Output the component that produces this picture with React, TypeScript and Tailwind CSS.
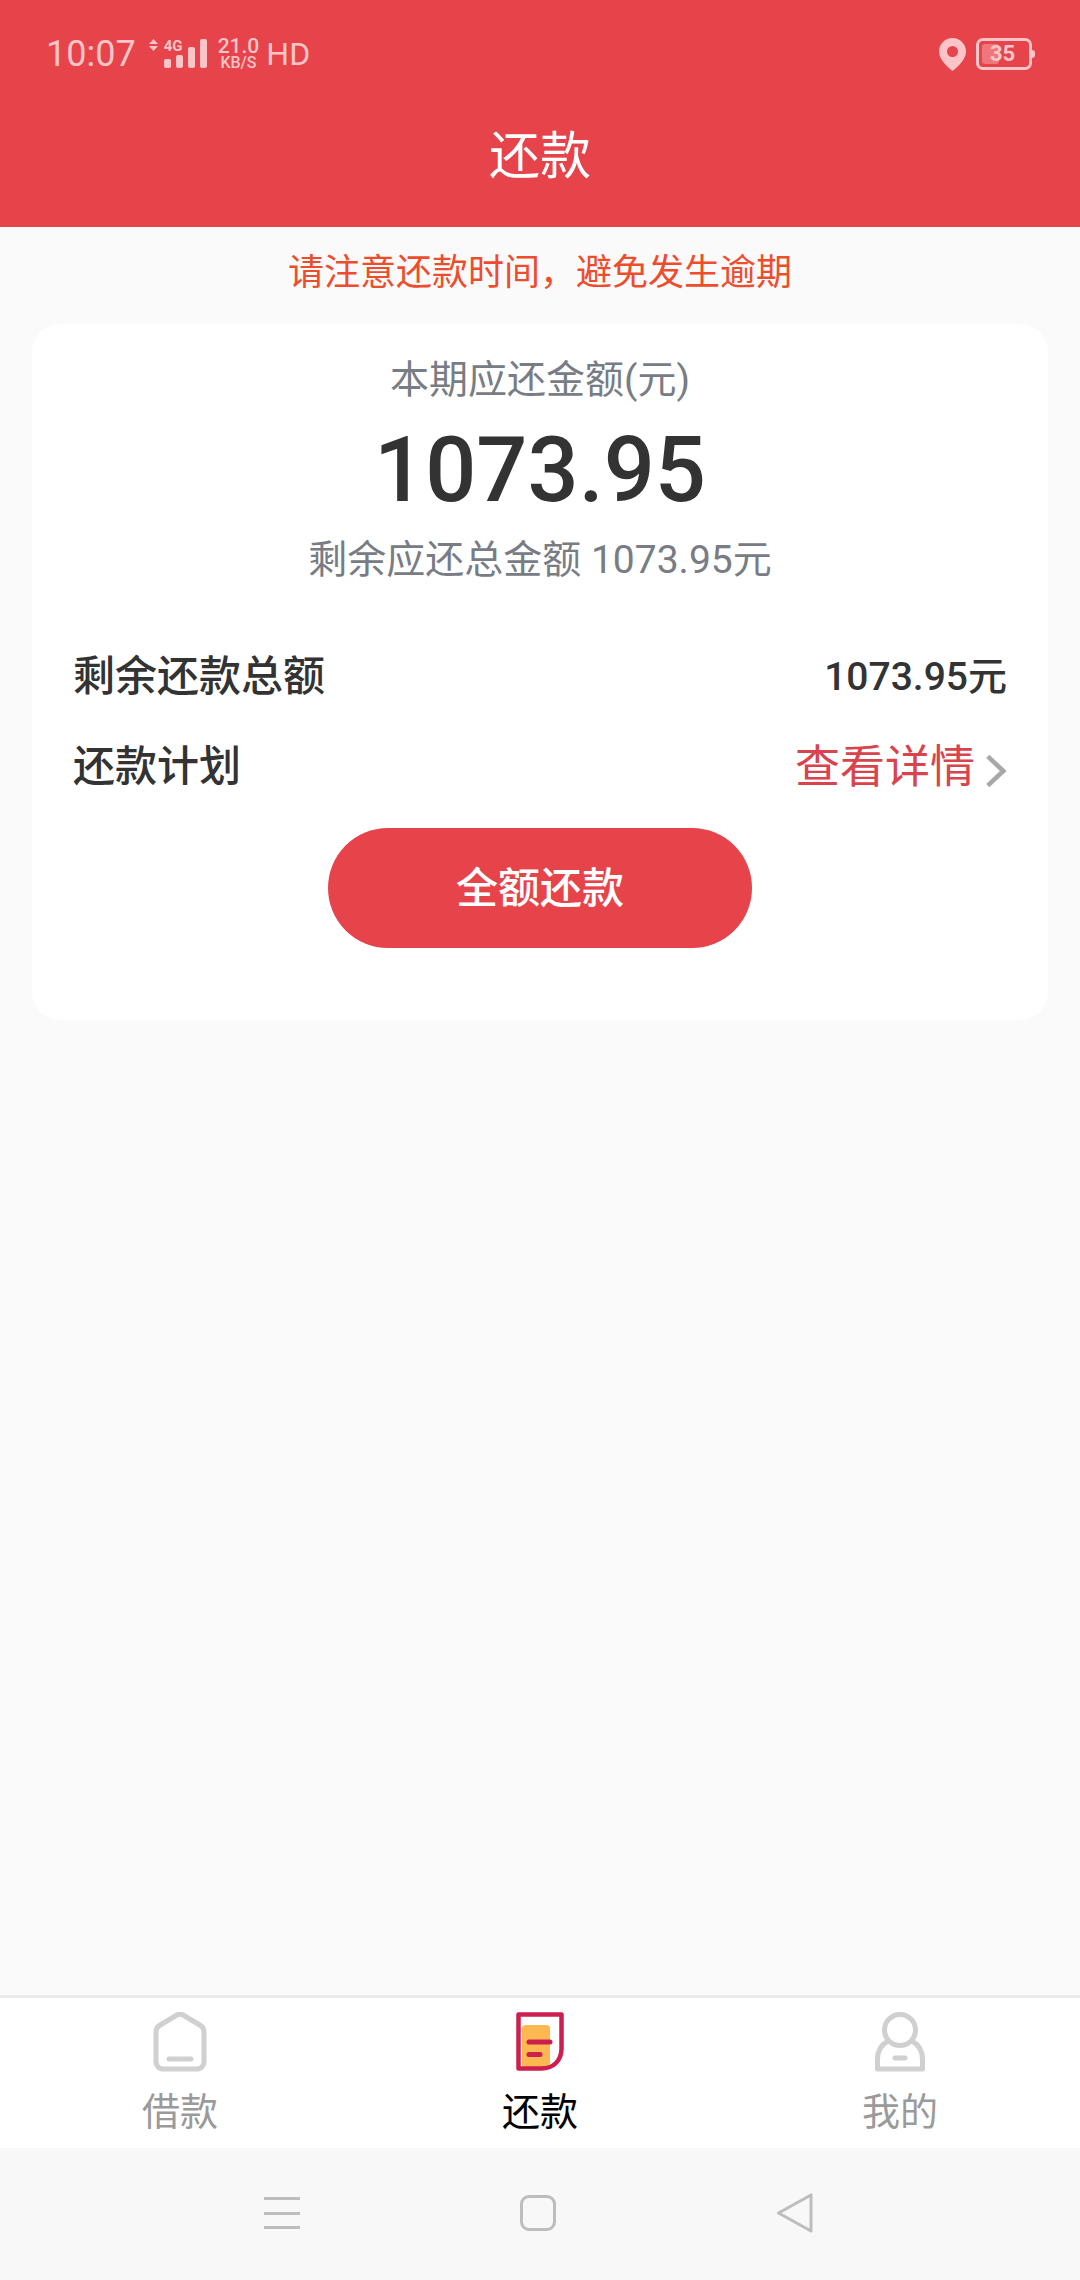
const cjk = { fontFamily: 'Roboto, "Noto Sans CJK SC", sans-serif' };

function StatusBar() {
  return (
    <div className="h-[108px] flex items-center justify-between pl-[46px] pr-[45px] text-[#fbc5c8]">
      <div className="flex items-center">
        <span className="text-[36px] leading-none">10:07</span>
        <div className="relative ml-[13px] -mt-[1px] w-[59px] h-[30px]">
          <svg width="59" height="30" viewBox="0 0 59 30" className="block" fill="currentColor">
            <path d="M4.500 0l4.500 5H0zM4.500 12L9 7H0z" />
            <rect x="15" y="20" width="7" height="9" rx="2" />
            <rect x="27" y="16" width="7" height="13" rx="2" />
            <rect x="39" y="8" width="7" height="21" rx="2" />
            <rect x="51" y="0" width="7" height="29" rx="2" />
          </svg>
          <span className="absolute left-[15px] top-0 text-[15px] leading-[14px] font-bold">4G</span>
        </div>
        <div className="ml-[10px] flex flex-col items-center font-medium -mt-[1px]">
          <span className="text-[21px] leading-[18px]">21.0</span>
          <span className="text-[16px] leading-[15px]">KB/S</span>
        </div>
        <span className="ml-[7px] text-[32px] leading-none">HD</span>
      </div>
      <div className="flex items-center">
        <svg width="27" height="33" viewBox="0 0 27 33" fill="currentColor">
          <path fillRule="evenodd" d="M13.500 0C6 0 0 6 0 13.500c0 8 8 15 13.500 19.500C19 28.500 27 21.500 27 13.500 27 6 21 0 13.500 0zm0 8a5.500 5.500 0 110 11 5.500 5.500 0 010-11z" />
        </svg>
        <div className="ml-[10px] relative w-[56px] h-[32px] rounded-[7px] border-[3px] border-[#fbc5c8] flex items-center justify-center">
          <div className="absolute left-[3px] top-[3px] bottom-[3px] w-[17px] rounded-[3px] bg-[#fbc5c8] opacity-40" />
          <span className="relative text-[22px] leading-none font-bold -ml-[3px]">35</span>
        </div>
        <div className="w-[3px] h-[8px] bg-[#fbc5c8] rounded-r-full" />
      </div>
    </div>
  );
}

function Tab({ label, active, children }: { label: string; active?: boolean; children: React.ReactNode }) {
  return (
    <div className="flex-1 flex flex-col items-center pt-[14px]">
      {children}
      <span className={`mt-[18px] text-[38px] leading-[44px] ${active ? "text-black" : "text-[#9a9a9a]"}`}>{label}</span>
    </div>
  );
}

export default function App() {
  return (
    <div className="w-[1080px] h-[2280px] flex flex-col bg-[#fafafa]" style={cjk}>
      <div className="h-[227px] bg-[#e6434a]">
        <StatusBar />
        <div className="text-center text-white text-[51px] leading-[72px] mt-[13px]">还款</div>
      </div>

      <div className="text-center text-[#ee4d2d] text-[36px] leading-[44px] mt-[24px]">请注意还款时间，避免发生逾期</div>

      <div className="mx-[32px] mt-[29px] h-[696px] bg-white rounded-[28px] pt-[32px] px-[41px] flex flex-col">
        <div className="text-center text-[#787c84] text-[39px] leading-[48px]">本期应还金额(元)</div>
        <div className="text-center text-[#333333] text-[90px] leading-[100px] font-medium mt-[17px]">1073.95</div>
        <div className="text-center text-[#787c84] text-[39px] leading-[48px] mt-[15px]">剩余应还总金额 1073.95元</div>

        <div className="flex items-center justify-between mt-[68px] h-[48px] text-[#333333]">
          <span className="text-[42px] font-medium">剩余还款总额</span>
          <span className="text-[39px] font-medium mt-[2px]">1073.95元</span>
        </div>
        <div className="flex items-center justify-between mt-[42px] h-[48px]">
          <span className="text-[42px] font-medium text-[#333333]">还款计划</span>
          <div className="flex items-center mt-[3px]">
            <span className="text-[45px] text-[#d9434b]">查看详情</span>
            <svg width="22" height="36" viewBox="0 0 24 38" className="ml-[10px] mt-[6px]" fill="none" stroke="#a8a8a8" strokeWidth="5">
              <path d="M3 3l17 16L3 35" />
            </svg>
          </div>
        </div>
        <div className="mt-[38px] self-center w-[424px] h-[120px] rounded-full bg-[#e6434a] text-white text-[42px] font-medium flex items-center justify-center">
          全额还款
        </div>
      </div>

      <div className="mt-auto h-[153px] bg-white border-t-[3px] border-[#ebebeb] flex">
        <Tab label="借款">
          <svg width="54" height="60" viewBox="0 0 54 60" fill="none" stroke="#d0d0d0" strokeWidth="5" strokeLinecap="round" strokeLinejoin="round">
            <path d="M3 20c0-3 1-5 3.500-6.500L23 3.500c2.500-1.500 5.500-1.500 8 0l16.500 10c2.500 1.500 3.500 3.500 3.500 6.500v29c0 5-3 8-8 8H11c-5 0-8-3-8-8z" />
            <path d="M16 47h22" />
          </svg>
        </Tab>
        <Tab label="还款" active>
          <svg width="48" height="60" viewBox="0 0 48 60">
            <rect x="6" y="13" width="28" height="44" rx="4" fill="#fdb851" />
            <path d="M2.500 2.500h43v34c0 12-8 20-20 20h-23z" fill="none" stroke="#cc1f4f" strokeWidth="4.500" strokeLinejoin="round" />
            <path d="M13 30h21M13 42.500h11" stroke="#cc1f4f" strokeWidth="5" strokeLinecap="round" />
          </svg>
        </Tab>
        <Tab label="我的">
          <svg width="50" height="60" viewBox="0 0 50 60" fill="none" stroke="#d0d0d0" strokeWidth="5" strokeLinecap="round" strokeLinejoin="round">
            <circle cx="25" cy="18" r="15.500" />
            <path d="M13 29C6 33 2.500 40 2.500 47v10h45V47c0-7-3.500-14-10.500-18" />
            <path d="M20 46h10" />
          </svg>
        </Tab>
      </div>

      <div className="h-[132px] bg-[#f8f8f8] flex items-start pt-[44px]">
        <div className="w-full flex justify-between items-center pl-[264px] pr-[266px]">
          <div className="w-[36px] h-[32px] flex flex-col justify-between">
            <div className="h-[3px] bg-[#bdbdbd]" />
            <div className="h-[3px] bg-[#bdbdbd]" />
            <div className="h-[3px] bg-[#bdbdbd]" />
          </div>
          <div className="w-[36px] h-[36px] rounded-[9px] border-[3px] border-[#bdbdbd]" />
          <svg width="38" height="42" viewBox="0 0 38 42" fill="none" stroke="#bdbdbd" strokeWidth="3" strokeLinejoin="round">
            <path d="M35 3v36L2.500 21z" />
          </svg>
        </div>
      </div>
    </div>
  );
}
